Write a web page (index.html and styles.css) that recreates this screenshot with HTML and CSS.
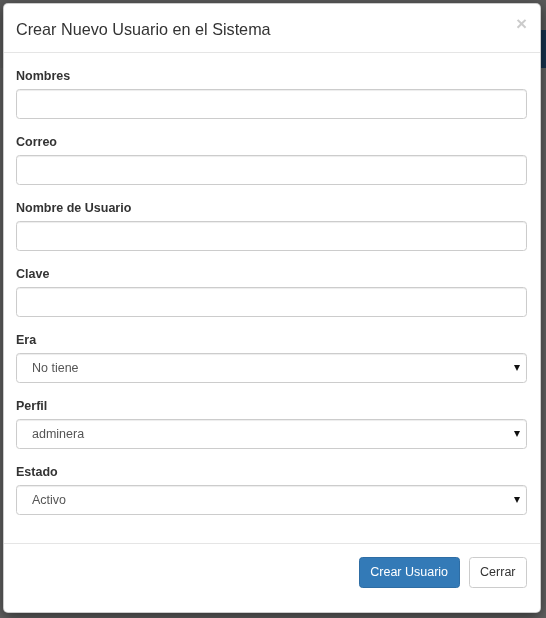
FILE: index.html
```html
<!DOCTYPE html>
<html lang="es">
<head>
<meta charset="utf-8">
<title>Crear Nuevo Usuario</title>
<link rel="stylesheet" href="styles.css">
</head>
<body>
<div class="page">
  <div class="page-top"></div>
  <div class="page-navbar"><div class="page-navbar-bar"></div></div>
  <div class="page-content"></div>
</div>

<div class="modal">
  <div class="modal-header">
    <h4 class="modal-title">Crear Nuevo Usuario en el Sistema</h4>
    <button class="close" type="button">×</button>
  </div>
  <div class="modal-body">
    <div class="form-group">
      <label class="label">Nombres</label>
      <input class="form-control" type="text">
    </div>
    <div class="form-group">
      <label class="label">Correo</label>
      <input class="form-control" type="text">
    </div>
    <div class="form-group">
      <label class="label">Nombre de Usuario</label>
      <input class="form-control" type="text">
    </div>
    <div class="form-group">
      <label class="label">Clave</label>
      <input class="form-control" type="password">
    </div>
    <div class="form-group">
      <label class="label">Era</label>
      <div class="select-wrap">
        <select class="form-control select"><option>No tiene</option></select>
      </div>
    </div>
    <div class="form-group">
      <label class="label">Perfil</label>
      <div class="select-wrap">
        <select class="form-control select"><option>adminera</option></select>
      </div>
    </div>
    <div class="form-group">
      <label class="label">Estado</label>
      <div class="select-wrap">
        <select class="form-control select"><option>Activo</option></select>
      </div>
    </div>
  </div>
  <div class="modal-footer">
    <button class="btn btn-primary" type="button">Crear Usuario</button>
    <button class="btn btn-default" type="button">Cerrar</button>
  </div>
</div>
</body>
</html>
```

FILE: styles.css
```css
html, body {
  margin: 0;
  padding: 0;
}

body {
  font-family: "Liberation Sans", Arial, sans-serif;
  color: #333;
  background: #5c5c5c;
}

.page {
  height: 618px;
  display: flex;
  flex-direction: column;
}

.page-top {
  height: 30px;
  background: #5a5a5a;
}

.page-navbar {
  height: 38px;
  display: flex;
  justify-content: flex-end;
  background: #5d5d5d;
}

.page-navbar-bar {
  width: 30px;
  background: #17324f;
}

.page-content {
  flex: 1;
  background: #626262;
}

.modal {
  position: fixed;
  top: 3px;
  left: 3px;
  width: 538px;
  box-sizing: border-box;
  background: #fff;
  border: 1px solid rgba(0, 0, 0, 0.2);
  border-radius: 5px;
  box-shadow: 0 4px 14px rgba(0, 0, 0, 0.5);
}

.modal-header {
  display: flex;
  justify-content: space-between;
  align-items: flex-start;
  padding: 14px 13px 12px 12px;
  border-bottom: 1px solid #e5e5e5;
}

.modal-title {
  margin: 0;
  font-size: 16.2px;
  font-weight: normal;
  line-height: 22px;
  color: #333;
}

.close {
  margin-top: -4px;
  padding: 0;
  border: 0;
  background: transparent;
  font-family: "Liberation Sans", Arial, sans-serif;
  font-size: 19px;
  font-weight: bold;
  line-height: 1;
  color: #000;
  opacity: 0.2;
}

.modal-body {
  padding: 14px 13px 14px 12px;
}

.form-group {
  margin-bottom: 14px;
}

.label {
  display: block;
  margin-bottom: 4px;
  font-size: 12.5px;
  font-weight: bold;
  line-height: 18px;
  color: #333;
}

.form-control {
  display: block;
  width: 100%;
  height: 30px;
  box-sizing: border-box;
  margin: 0;
  padding: 0 11px;
  border: 1px solid #ccc;
  border-radius: 3.5px;
  background: #fff;
  box-shadow: inset 0 1px 1px rgba(0, 0, 0, 0.075);
  font-family: "Liberation Sans", Arial, sans-serif;
  font-size: 12.5px;
  color: #555;
}

.select-wrap {
  position: relative;
}

.select {
  -webkit-appearance: none;
  appearance: none;
  padding: 0 15px;
}

.select-wrap::after {
  content: "";
  position: absolute;
  right: 7px;
  top: 12px;
  width: 0;
  height: 0;
  border-left: 3.5px solid transparent;
  border-right: 3.5px solid transparent;
  border-top: 6px solid #111;
  pointer-events: none;
}

.modal-footer {
  display: flex;
  justify-content: flex-end;
  gap: 9px;
  padding: 13px 13px 24px 12px;
  border-top: 1px solid #e5e5e5;
}

.btn {
  height: 31px;
  box-sizing: border-box;
  padding: 0 10.5px;
  border: 1px solid transparent;
  border-radius: 3.5px;
  font-family: "Liberation Sans", Arial, sans-serif;
  font-size: 12.5px;
  line-height: 29px;
}

.btn-primary {
  background: #337ab7;
  border-color: #2e6da4;
  color: #fff;
}

.btn-default {
  background: #fff;
  border-color: #ccc;
  color: #333;
}
```
